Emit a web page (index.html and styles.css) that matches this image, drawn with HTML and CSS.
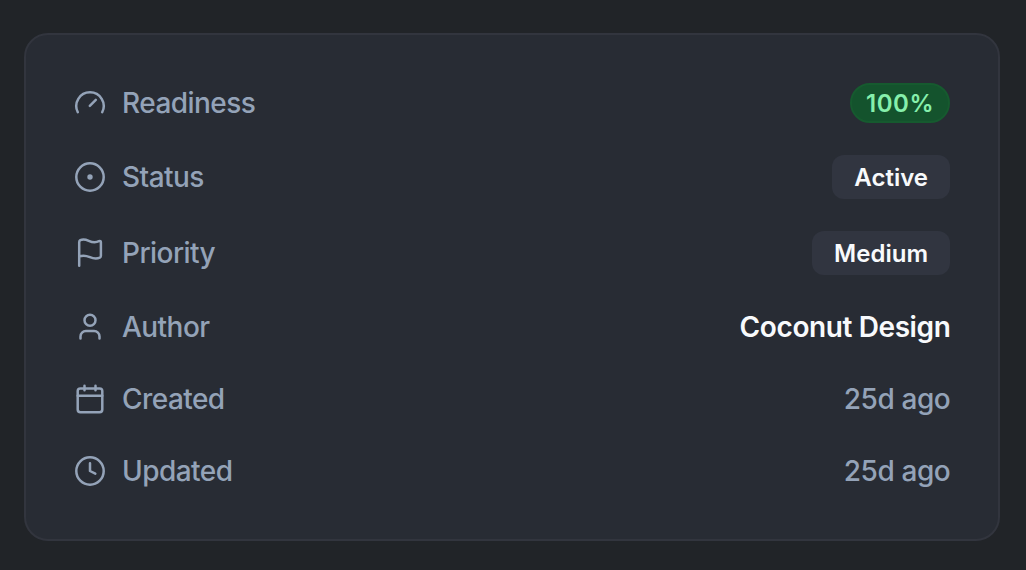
FILE: index.html
```html
<!DOCTYPE html>
<html lang="en">
<head>
    <meta charset="UTF-8">
    <meta name="viewport" content="width=device-width, initial-scale=1.0">
    <title>Details</title>
    <link rel="stylesheet" href="styles.css">
</head>
<body>
    <div class="card">
        <div class="row">
            <svg class="icon" viewBox="0 0 32 32">
                <path d="M3.8 25.2A13.7 13.7 0 1 1 28.2 25.2"/>
                <path d="M15.8 18.8L21.8 12.8"/>
            </svg>
            <span class="label">Readiness</span>
            <span class="badge badge-green">100%</span>
        </div>
        <div class="row">
            <svg class="icon" viewBox="0 0 32 32">
                <circle cx="16" cy="16" r="13.7"/>
                <circle class="dot" cx="16" cy="16" r="2.7"/>
            </svg>
            <span class="label">Status</span>
            <span class="badge">Active</span>
        </div>
        <div class="row">
            <svg class="icon" viewBox="0 0 32 32">
                <path d="M5.2 28.8V5.2C5.2 4.2 5.6 3.5 6.3 3.1C13.5 -.2 16.5 8.4 25 4.2C26.1 3.7 26.9 4.2 26.9 5.2V18.7C26.9 19.6 26.5 20.2 25.8 20.6C17.5 24.8 14.5 15.6 5.2 19.5"/>
            </svg>
            <span class="label">Priority</span>
            <span class="badge">Medium</span>
        </div>
        <div class="row">
            <svg class="icon" viewBox="0 0 32 32">
                <circle cx="16" cy="9.3" r="5.5"/>
                <path d="M6.5 27.5V25.5A5.4 5.4 0 0 1 11.9 20.1H20.1A5.4 5.4 0 0 1 25.5 25.5V27.5"/>
            </svg>
            <span class="label">Author</span>
            <span class="value author">Coconut Design</span>
        </div>
        <div class="row">
            <svg class="icon" viewBox="0 0 32 32">
                <rect x="3.7" y="5.4" width="24.6" height="23.8" rx="2.7"/>
                <path d="M3.7 12.7H28.3M10.5 2.7V7.3M21.5 2.7V7.3"/>
            </svg>
            <span class="label">Created</span>
            <span class="value">25d ago</span>
        </div>
        <div class="row">
            <svg class="icon" viewBox="0 0 32 32">
                <circle cx="16" cy="16" r="13.7"/>
                <path d="M16 8.3V16L21.3 18.7"/>
            </svg>
            <span class="label">Updated</span>
            <span class="value">25d ago</span>
        </div>
    </div>
</body>
</html>
```
FILE: styles.css
```css
* {
    box-sizing: border-box;
}

body {
    margin: 0;
    padding: 33px 26px 29px 24px;
    background-color: #212428;
    color: #94a3b8;
    font-family: Inter, sans-serif;
    font-size: 28px;
    line-height: 40px;
}

.card {
    display: flex;
    flex-direction: column;
    gap: 32px;
    padding: 48px;
    background-color: #282c34;
    border: 2px solid #32353e;
    border-radius: 24px;
}

.row {
    display: flex;
    align-items: center;
}

.icon {
    width: 32px;
    height: 32px;
    margin-right: 16px;
    fill: none;
    stroke: #94a3b8;
    stroke-width: 2.5;
    stroke-linecap: round;
    stroke-linejoin: round;
}

.icon .dot {
    fill: #94a3b8;
    stroke: none;
}

.label {
    margin-right: auto;
    letter-spacing: -0.55px;
    font-weight: 450;
}

.value {
    margin-right: -0.4px;
    letter-spacing: -0.4px;
    font-weight: 450;
}

.author {
    color: #f8fafc;
    font-weight: 600;
}

.badge {
    padding: 7px 22px 5px;
    border-radius: 12px;
    background-color: #313540;
    color: #f8fafc;
    font-size: 24px;
    font-weight: 600;
    line-height: 32px;
}

.badge-green {
    padding: 3px 14px 1px;
    border: 2px solid #165a2f;
    border-radius: 20px;
    background-color: #14532d;
    color: #86efac;
    letter-spacing: 0.5px;
}
```
